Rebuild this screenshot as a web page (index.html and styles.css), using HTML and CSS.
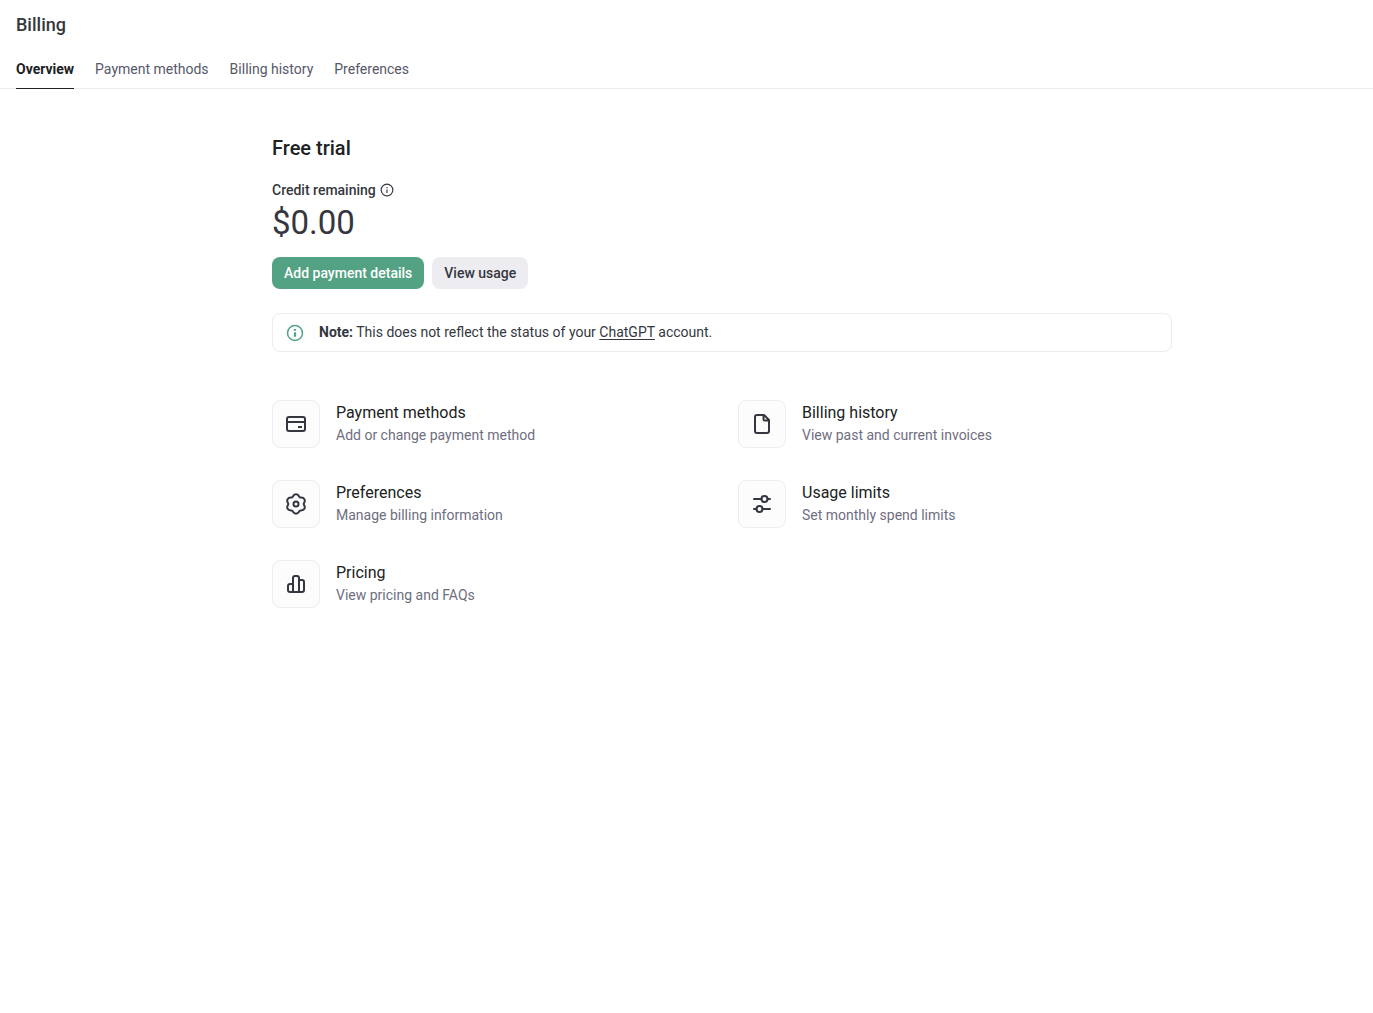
FILE: index.html
```html
<!DOCTYPE html>
<html lang="en">
<head>
<meta charset="utf-8">
<meta name="viewport" content="width=device-width, initial-scale=1">
<title>Billing</title>
<link rel="stylesheet" href="styles.css">
</head>
<body>
<header class="page-header">
  <h1 class="page-title">Billing</h1>
  <nav class="tabs" aria-label="Billing sections">
    <a class="tab tab-active" href="#overview" aria-current="page">Overview</a>
    <a class="tab" href="#payment-methods">Payment methods</a>
    <a class="tab" href="#history">Billing history</a>
    <a class="tab" href="#preferences">Preferences</a>
  </nav>
</header>
<main class="content">
  <div class="column">
    <h2 class="plan">Free trial</h2>
    <div class="credit-label">
      <span>Credit remaining</span>
      <svg class="info-small" viewBox="0 0 24 24" aria-hidden="true"><circle cx="12" cy="12" r="10"/><path d="M12 11v6M12 7v2"/></svg>
    </div>
    <div class="credit-value">$0.00</div>
    <div class="actions">
      <button class="btn btn-primary" type="button">Add payment details</button>
      <button class="btn btn-neutral" type="button">View usage</button>
    </div>
    <div class="note">
      <svg class="note-icon" viewBox="0 0 24 24" aria-hidden="true"><circle cx="12" cy="12" r="10"/><path stroke-width="3" d="M12 11v6M12 6.500v2.500"/></svg>
      <p class="note-text"><b class="note-lead">Note:</b> This does not reflect the status of your <a class="note-link" href="#chatgpt">ChatGPT</a> account.</p>
    </div>
    <div class="links">
      <a class="link-card" href="#payment-methods">
        <span class="tile"><svg class="icon" viewBox="0 0 24 24" aria-hidden="true"><rect x="3" y="5" width="18" height="14" rx="2"/><path stroke-linecap="butt" d="M3 10h18M14 15h4"/></svg></span>
        <span class="link-text"><span class="link-title">Payment methods</span><span class="link-desc">Add or change payment method</span></span>
      </a>
      <a class="link-card" href="#history">
        <span class="tile"><svg class="icon" viewBox="0 0 24 24" aria-hidden="true"><path d="M14 3H7a2 2 0 0 0-2 2v14a2 2 0 0 0 2 2h10a2 2 0 0 0 2-2V8zM13.500 3V7a1.500 1.500 0 0 0 1.500 1.500h4"/></svg></span>
        <span class="link-text"><span class="link-title">Billing history</span><span class="link-desc">View past and current invoices</span></span>
      </a>
      <a class="link-card" href="#preferences">
        <span class="tile"><svg class="icon" viewBox="0 0 24 24" aria-hidden="true"><path d="M12 2.300C14.700 2.300 14.810 4.730 15.850 5.330S19.050 4.810 20.400 7.150 19.700 10.800 19.700 12 21.750 14.510 20.400 16.850 16.890 18.070 15.850 18.670 14.700 21.700 12 21.700 9.190 19.270 8.150 18.670 4.950 19.190 3.600 16.850 4.300 13.200 4.300 12 2.250 9.490 3.600 7.150 7.110 5.930 8.150 5.330 9.300 2.300 12 2.300z"/><circle cx="12" cy="12" r="2.500"/></svg></span>
        <span class="link-text"><span class="link-title">Preferences</span><span class="link-desc">Manage billing information</span></span>
      </a>
      <a class="link-card" href="#limits">
        <span class="tile"><svg class="icon" viewBox="0 0 24 24" aria-hidden="true"><path stroke-linecap="round" d="M4 7h7.500M17.500 7H20M4 17h2.500M12.500 17H20"/><circle cx="14.500" cy="7" r="3"/><circle cx="9.500" cy="17" r="3"/></svg></span>
        <span class="link-text"><span class="link-title">Usage limits</span><span class="link-desc">Set monthly spend limits</span></span>
      </a>
      <a class="link-card" href="#pricing">
        <span class="tile"><svg class="icon" viewBox="0 0 24 24" aria-hidden="true"><path d="M9 20H6a2 2 0 0 1-2-2v-4a2 2 0 0 1 2-2h3zM9 20V6a2 2 0 0 1 2-2h2a2 2 0 0 1 2 2v14zM15 8h3a2 2 0 0 1 2 2v8a2 2 0 0 1-2 2h-3M8 20h8"/></svg></span>
        <span class="link-text"><span class="link-title">Pricing</span><span class="link-desc">View pricing and FAQs</span></span>
      </a>
    </div>
  </div>
</main>
</body>
</html>
```
FILE: styles.css
```css
* { box-sizing: border-box; }

body {
  margin: 0;
  background: #fff;
  color: #353740;
  font: 14px/20px Roboto, "Liberation Sans", sans-serif;
}

h1, h2, p { margin: 0; }
a { color: inherit; text-decoration: none; }

.page-header {
  padding: 13px 16px 0;
  border-bottom: 1px solid #ececf1;
}
.page-title {
  font-size: 18px;
  line-height: 24px;
  font-weight: 500;
}
.tabs {
  display: flex;
  gap: 21px;
  margin-top: 12px;
}
.tab {
  padding: 10px 0 9px;
  margin-bottom: -1px;
  border-bottom: 1px solid transparent;
  color: #565869;
}
.tab-active {
  color: #202123;
  border-color: #202123;
  font-weight: 700;
}

.content { padding: 43px 0 48px 71px; }
.column {
  max-width: 900px;
  margin: 0 auto;
}
.plan {
  color: #202123;
  font-size: 20px;
  line-height: 32px;
  font-weight: 500;
}
.credit-label {
  display: flex;
  align-items: center;
  gap: 4px;
  margin-top: 16px;
  font-weight: 500;
}
.credit-value {
  font-size: 33px;
  line-height: 45px;
}
.actions {
  display: flex;
  gap: 8px;
  margin-top: 12px;
}
.btn {
  height: 32px;
  padding: 0 12px;
  border: 0;
  border-radius: 8px;
  font: inherit;
  font-weight: 500;
}
.btn-primary { background: #53a283; color: #fff; }
.btn-neutral { background: #ececf1; color: #353740; }

.note {
  display: flex;
  align-items: center;
  gap: 15px;
  margin-top: 24px;
  padding: 8px 13px;
  border: 1px solid #ececf1;
  border-radius: 8px;
}
.note-text { line-height: 21px; }
.note-lead { font-weight: 700; }
.note-link { text-decoration: underline; text-underline-offset: 2px; }

.links {
  display: grid;
  grid-template-columns: repeat(2, 1fr);
  gap: 32px;
  margin-top: 48px;
}
.link-card {
  display: flex;
  gap: 16px;
}
.tile {
  display: flex;
  align-items: center;
  justify-content: center;
  width: 48px;
  height: 48px;
  border: 1px solid #ececf1;
  border-radius: 8px;
  background: #fcfcfd;
}
.link-text {
  display: flex;
  flex-direction: column;
}
.link-title {
  color: #202123;
  font-size: 16px;
  line-height: 26px;
}
.link-desc { color: #6e6e80; line-height: 18px; }

svg {
  fill: none;
  stroke: currentColor;
  stroke-width: 2;
  stroke-linejoin: round;
}
.icon { width: 24px; height: 24px; }
.info-small { width: 14px; height: 14px; }
.note-icon { width: 18px; height: 18px; color: #53a283; }
```
